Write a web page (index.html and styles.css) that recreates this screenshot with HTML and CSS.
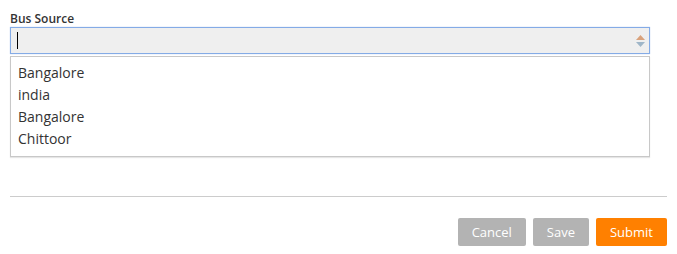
FILE: index.html
```html
<!DOCTYPE html>
<html>
<head>
<meta charset="utf-8">
<link rel="stylesheet" href="styles.css">
</head>
<body>
<div class="page">
  <div class="field">
    <div class="label">Bus Source</div>
    <div class="input">
      <span class="caret"></span>
      <span class="spinner">
        <svg width="9" height="12" viewBox="0 0 9 12">
          <polygon points="4.5,0 9,5 0,5" fill="#d9a27c"/>
          <polygon points="0,7 9,7 4.5,12" fill="#9fb6c8"/>
        </svg>
      </span>
    </div>
    <div class="list">
      <div class="item">Bangalore</div>
      <div class="item">india</div>
      <div class="item">Bangalore</div>
      <div class="item">Chittoor</div>
    </div>
  </div>
  <div class="rule"></div>
  <div class="actions">
    <button class="btn btn-grey">Cancel</button>
    <button class="btn btn-grey">Save</button>
    <button class="btn btn-orange">Submit</button>
  </div>
</div>
</body>
</html>
```

FILE: styles.css
```css
* { box-sizing: border-box; }
body {
  margin: 0;
  font-family: "Open Sans", "Liberation Sans", sans-serif;
  color: #333;
  background: #fff;
}
.page {
  width: 677px;
  padding: 11px 10px 0 10px;
}
.field { width: 640px; }
.label {
  font-size: 12px;
  font-weight: 600;
  line-height: 16px;
  color: #333;
}
.input {
  height: 27px;
  border: 1px solid #84abe6;
  background: #efefef;
  display: flex;
  align-items: center;
  justify-content: space-between;
  padding: 0 1px 0 6px;
  box-shadow: 0 0 1px #a9c4ee;
}
.caret {
  width: 1px;
  height: 17px;
  background: #000;
}
.spinner {
  display: flex;
  align-items: center;
  width: 12px;
}
.spinner svg { display: block; }
.list {
  margin-top: 2px;
  border: 1px solid #c8c8c8;
  padding: 5px 7px 6px 7px;
  box-shadow: 0 1px 1px #e6e6e6;
}
.item {
  font-size: 14px;
  line-height: 22px;
  color: #333;
}
.rule {
  margin-top: 39px;
  height: 1px;
  background: #cccccc;
}
.actions {
  margin-top: 21px;
  display: flex;
  justify-content: flex-end;
  gap: 7px;
}
.btn {
  height: 28px;
  padding: 0 14px;
  border: none;
  border-radius: 2px;
  font-family: "Open Sans", "Liberation Sans", sans-serif;
  font-size: 13px;
  color: #fff;
  line-height: 28px;
}
.btn-grey { background: #b3b3b3; }
.btn-orange { background: #ff8000; }
```
